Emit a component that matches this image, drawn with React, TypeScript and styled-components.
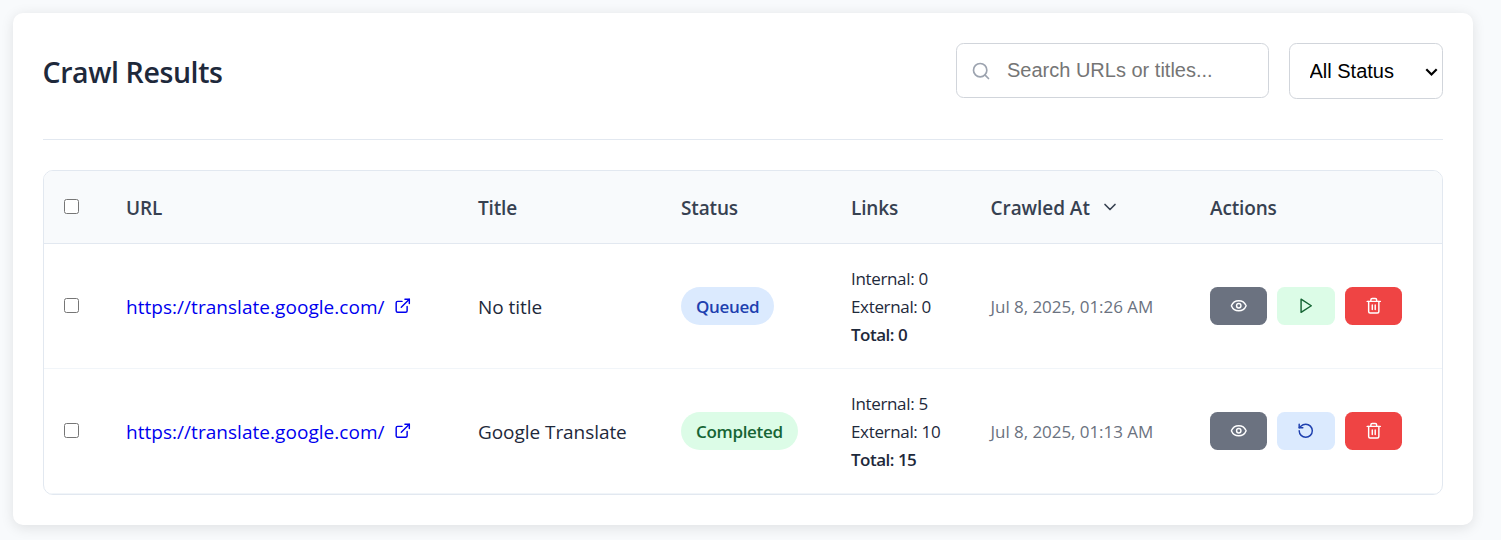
import React from "react";
import styled, { createGlobalStyle } from "styled-components";
import { ChevronDown, ExternalLink, Eye, RotateCcw, Search, Trash2 } from "lucide-react";

const GlobalStyle = createGlobalStyle`
  *, *::before, *::after { box-sizing: border-box; }
  body {
    margin: 0;
    background: #f8fafc;
    color: #1e293b;
    font-family: "Segoe UI", "Open Sans", sans-serif;
    font-size: 19px;
    line-height: 30px;
  }
`;

const Page = styled.main`
  padding: 13px 28px 15px 13px;
`;

const Card = styled.section`
  height: 512px;
  padding: 30px;
  background: #fff;
  border-radius: 10px;
  box-shadow: 0 2.5px 12.5px rgba(0, 0, 0, 0.1);
`;

const CardHeader = styled.header`
  display: flex;
  align-items: flex-start;
  justify-content: space-between;
  height: 97px;
  margin-bottom: 30px;
  border-bottom: 1px solid #e2e8f0;
`;

const Heading = styled.h2`
  margin: 9px 0 0 -0.5px;
  font-size: 28.5px;
  font-weight: 600;
  line-height: 40px;
  letter-spacing: -0.4px;
`;

const Filters = styled.div`
  display: flex;
  align-items: flex-start;
  gap: 20px;
`;

const SearchBox = styled.label`
  display: flex;
  align-items: center;
  gap: 16px;
  width: 313px;
  height: 55px;
  padding: 0 15px 0 14px;
  border: 1px solid #d1d5db;
  border-radius: 7.5px;
  color: #9ca3af;
`;

const SearchInput = styled.input`
  flex: 1;
  min-width: 0;
  padding: 0;
  border: 0;
  outline: 0;
  background: transparent;
  font: 20px "Liberation Sans", Arial, sans-serif;

  &::placeholder { color: #757575; }
`;

const SelectBox = styled.div`
  position: relative;
  width: 154px;
  height: 56px;
`;

const StatusSelect = styled.select`
  appearance: none;
  width: 100%;
  height: 100%;
  padding: 0 19.5px;
  border: 1px solid #d1d5db;
  border-radius: 7.5px;
  background: #fff;
  color: #000;
  font: 20px "Liberation Sans", Arial, sans-serif;
`;

const SelectArrow = styled.svg`
  position: absolute;
  top: 25px;
  right: 5px;
  pointer-events: none;
`;

const TableFrame = styled.div`
  overflow: hidden;
  border: 1px solid #e2e8f0;
  border-radius: 10px;
`;

const Table = styled.table`
  width: 100%;
  table-layout: fixed;
  border-collapse: separate;
  border-spacing: 0;
`;

const Column = styled.col<{ $width: number }>`
  width: ${(p) => p.$width}px;
`;

const HeadCell = styled.th`
  height: 73px;
  padding: 2px 20px 0;
  background: #f8fafc;
  border-bottom: 1px solid #e2e8f0;
  color: #374151;
  font-weight: 600;
  text-align: left;
  white-space: nowrap;
  letter-spacing: -0.15px;
`;

const Cell = styled.td`
  height: 125px;
  padding: 2px 20px 0;
  border-bottom: 1px solid #f1f5f9;
  white-space: nowrap;
`;

const SortLabel = styled.span`
  display: flex;
  align-items: center;
  gap: 10px;
  padding-left: 0.5px;
  letter-spacing: -0.05px;
`;

const SortIcon = styled(ChevronDown)`
  margin-top: -3px;
`;

const Checkbox = styled.input.attrs({ type: "checkbox" })`
  display: block;
  width: 15px;
  height: 15px;
  margin: -3px 0 0;
`;

const UrlLink = styled.a`
  display: flex;
  align-items: center;
  gap: 9px;
  color: #0000ee;
  text-decoration: none;
  letter-spacing: 0.04px;
`;

const LinkIcon = styled(ExternalLink)`
  margin-top: -2px;
`;

const PageTitle = styled.span`
  letter-spacing: -0.06px;
`;

type Tone = "blue" | "green" | "gray" | "red";

const tones: Record<Tone, { bg: string; fg: string }> = {
  blue: { bg: "#dbeafe", fg: "#1e40af" },
  green: { bg: "#dcfce7", fg: "#166534" },
  gray: { bg: "#6b7280", fg: "#ffffff" },
  red: { bg: "#ef4444", fg: "#ffffff" },
};

const Badge = styled.span<{ $tone: Tone }>`
  display: inline-flex;
  align-items: center;
  height: 38px;
  padding: 1px 15px 0;
  margin-top: -2px;
  vertical-align: middle;
  border-radius: 19px;
  background: ${(p) => tones[p.$tone].bg};
  color: ${(p) => tones[p.$tone].fg};
  font-size: 17px;
  font-weight: 600;
  letter-spacing: -0.32px;
`;

const LinkCounts = styled.div`
  font-size: 17px;
  line-height: 28px;
  letter-spacing: -0.34px;

  strong {
    font-weight: 600;
    letter-spacing: -0.5px;
  }
`;

const CrawlDate = styled.div`
  padding-left: 0.5px;
  color: #6b7280;
  font-size: 17px;
  letter-spacing: -0.05px;
`;

const Actions = styled.div`
  display: flex;
  gap: 10px;
  margin-top: -2px;
`;

const ActionButton = styled.button<{ $tone: Tone }>`
  display: flex;
  align-items: center;
  justify-content: center;
  width: 57.4px;
  height: 38px;
  padding: 0;
  border: 0;
  border-radius: 7.5px;
  background: ${(p) => tones[p.$tone].bg};
  color: ${(p) => tones[p.$tone].fg};
`;

const PlayIcon = () => (
  <svg width="17.5" height="17.5" viewBox="0 0 24 24" fill="none" stroke="currentColor" strokeWidth="2" strokeLinecap="round" strokeLinejoin="round">
    <polygon points="5.6 3 19.6 12 5.6 21 5.6 3" />
  </svg>
);

const columnWidths = [62, 352, 203, 170, 139, 220, 252];

const crawls = [
  { id: 1, url: "https://translate.google.com/", title: "No title", done: false, internal: 0, external: 0, date: "Jul 8, 2025, 01:26 AM" },
  { id: 2, url: "https://translate.google.com/", title: "Google Translate", done: true, internal: 5, external: 10, date: "Jul 8, 2025, 01:13 AM" },
];

export default function App() {
  return (
    <Page>
      <GlobalStyle />
      <Card>
        <CardHeader>
          <Heading>Crawl Results</Heading>
          <Filters>
            <SearchBox>
              <Search size={20} />
              <SearchInput placeholder="Search URLs or titles..." />
            </SearchBox>
            <SelectBox>
              <StatusSelect defaultValue="all">
                <option value="all">All Status</option>
              </StatusSelect>
              <SelectArrow width="13" height="9" viewBox="0 0 13 9" fill="none" stroke="#000" strokeWidth="2.2">
                <path d="M1.3 1.3 6.5 6.5l5.2-5.2" />
              </SelectArrow>
            </SelectBox>
          </Filters>
        </CardHeader>
        <TableFrame>
          <Table>
            <colgroup>
              {columnWidths.map((width, i) => (
                <Column key={i} $width={width} />
              ))}
            </colgroup>
            <thead>
              <tr>
                <HeadCell><Checkbox /></HeadCell>
                <HeadCell>URL</HeadCell>
                <HeadCell>Title</HeadCell>
                <HeadCell>Status</HeadCell>
                <HeadCell>Links</HeadCell>
                <HeadCell><SortLabel>Crawled At <SortIcon size={20} /></SortLabel></HeadCell>
                <HeadCell>Actions</HeadCell>
              </tr>
            </thead>
            <tbody>
              {crawls.map((c) => (
                <tr key={c.id}>
                  <Cell><Checkbox /></Cell>
                  <Cell><UrlLink href={c.url}>{c.url}<LinkIcon size={17.5} /></UrlLink></Cell>
                  <Cell><PageTitle>{c.title}</PageTitle></Cell>
                  <Cell><Badge $tone={c.done ? "green" : "blue"}>{c.done ? "Completed" : "Queued"}</Badge></Cell>
                  <Cell>
                    <LinkCounts>
                      <div>Internal: {c.internal}</div>
                      <div>External: {c.external}</div>
                      <strong>Total: {c.internal + c.external}</strong>
                    </LinkCounts>
                  </Cell>
                  <Cell><CrawlDate>{c.date}</CrawlDate></Cell>
                  <Cell>
                    <Actions>
                      <ActionButton $tone="gray" aria-label="View"><Eye size={17.5} /></ActionButton>
                      <ActionButton $tone={c.done ? "blue" : "green"} aria-label={c.done ? "Restart" : "Start"}>
                        {c.done ? <RotateCcw size={17.5} /> : <PlayIcon />}
                      </ActionButton>
                      <ActionButton $tone="red" aria-label="Delete"><Trash2 size={17.5} /></ActionButton>
                    </Actions>
                  </Cell>
                </tr>
              ))}
            </tbody>
          </Table>
        </TableFrame>
      </Card>
    </Page>
  );
}
